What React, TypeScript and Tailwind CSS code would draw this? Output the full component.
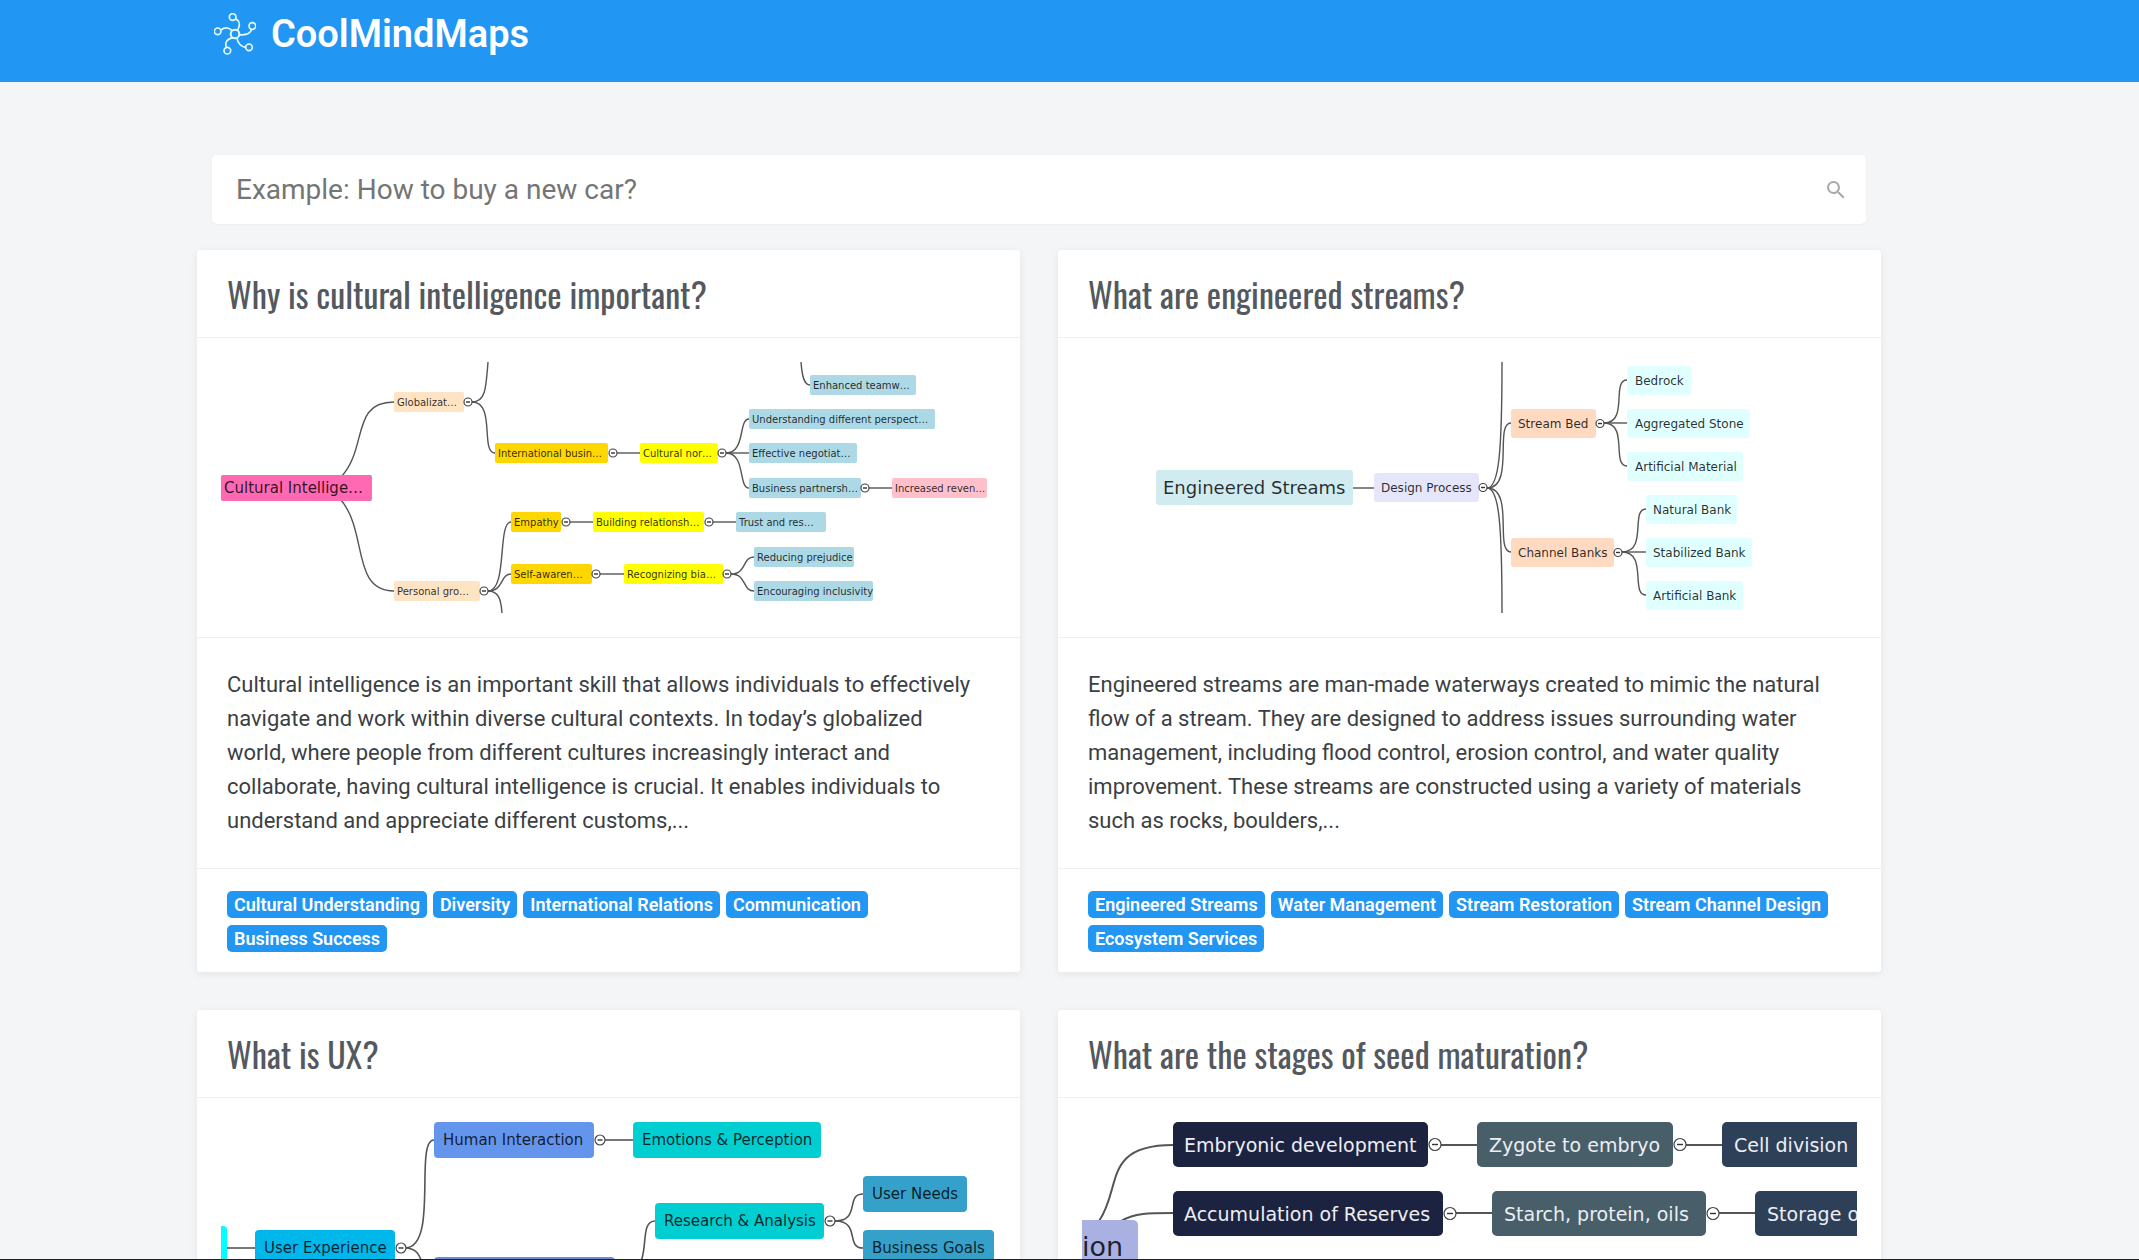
import React from 'react';
import { MdSearch } from 'react-icons/md';

interface MapNode {
  x: number;
  y: number;
  w: number;
  h: number;
  label?: string;
  fill: string;
  size?: number;
  pad?: number;
  color?: string;
  toggle?: number;
}

interface MindMapData {
  nodes: MapNode[];
  edges: string[];
  r: number;
  radius: number;
  stroke: number;
}

interface Article {
  slug: string;
  title: string;
  map: MindMapData;
  text?: string;
  tags?: string[];
}

const culturalMap: MindMapData = {
  r: 4,
  radius: 2,
  stroke: 1.4,
  edges: [
    'M121 114 C147 84 130 40 173 40',
    'M120 138 C147 170 130 229 173 229',
    'M251 40 C264 40 265 28 267 0',
    'M251 40 C275 40 259 91 274 91',
    'M395 91 H419',
    'M505 91 C525 91 517 57 528 57',
    'M505 91 H528',
    'M505 91 C525 91 517 126 528 126',
    'M580 0 C581 14 583 23 589 23',
    'M648 126 H671',
    'M267 229 C287 229 276 160 290 160',
    'M267 229 C283 229 279 212 290 212',
    'M267 229 C278 229 280 238 281 251',
    'M349 160 H372',
    'M491 160 H515',
    'M379 212 H403',
    'M510 212 C526 212 521 195 533 195',
    'M510 212 C526 212 521 229 533 229',
  ],
  nodes: [
    { x: 0, y: 113, w: 151, h: 26, label: 'Cultural Intellige…', fill: '#ff69b4', size: 15, pad: 3 },
    { x: 173, y: 30, w: 70, h: 20, label: 'Globalizat…', fill: '#ffe4c4', size: 10, pad: 3, toggle: 247 },
    { x: 173, y: 219, w: 86, h: 20, label: 'Personal gro…', fill: '#ffe4c4', size: 10, pad: 3, toggle: 263 },
    { x: 274, y: 81, w: 113, h: 20, label: 'International busin…', fill: '#ffd700', size: 10, pad: 3, toggle: 392 },
    { x: 419, y: 81, w: 78, h: 20, label: 'Cultural nor…', fill: '#ffff00', size: 10, pad: 3, toggle: 501 },
    { x: 589, y: 13, w: 106, h: 20, label: 'Enhanced teamw…', fill: '#add8e6', size: 10, pad: 3 },
    { x: 528, y: 47, w: 186, h: 20, label: 'Understanding different perspect…', fill: '#add8e6', size: 10, pad: 3 },
    { x: 528, y: 81, w: 108, h: 20, label: 'Effective negotiat…', fill: '#add8e6', size: 10, pad: 3 },
    { x: 528, y: 116, w: 112, h: 20, label: 'Business partnersh…', fill: '#add8e6', size: 10, pad: 3, toggle: 644 },
    { x: 671, y: 116, w: 95, h: 20, label: 'Increased reven…', fill: '#ffc0cb', size: 10, pad: 3 },
    { x: 290, y: 150, w: 50, h: 20, label: 'Empathy', fill: '#ffd700', size: 10, pad: 3, toggle: 345 },
    { x: 372, y: 150, w: 111, h: 20, label: 'Building relationsh…', fill: '#ffff00', size: 10, pad: 3, toggle: 488 },
    { x: 515, y: 150, w: 90, h: 20, label: 'Trust and res…', fill: '#add8e6', size: 10, pad: 3 },
    { x: 290, y: 202, w: 81, h: 20, label: 'Self-awaren…', fill: '#ffd700', size: 10, pad: 3, toggle: 375 },
    { x: 403, y: 202, w: 99, h: 20, label: 'Recognizing bia…', fill: '#ffff00', size: 10, pad: 3, toggle: 506 },
    { x: 533, y: 185, w: 100, h: 20, label: 'Reducing prejudice', fill: '#add8e6', size: 10, pad: 3 },
    { x: 533, y: 219, w: 119, h: 20, label: 'Encouraging inclusivity', fill: '#add8e6', size: 10, pad: 3 },
  ],
};

const streamsMap: MindMapData = {
  r: 4,
  radius: 3,
  stroke: 1.4,
  edges: [
    'M271 126 H292',
    'M405 126 C417 126 420 90 420 0',
    'M405 126 C433 126 412 61 429 61',
    'M405 126 C433 126 412 190 429 190',
    'M405 126 C417 126 420 161 420 251',
    'M522 61 C547 61 529 18 545 18',
    'M522 61 H545',
    'M522 61 C547 61 529 104 545 104',
    'M540 190 C566 190 548 147 564 147',
    'M540 190 H564',
    'M540 190 C566 190 548 233 564 233',
  ],
  nodes: [
    { x: 74, y: 108, w: 197, h: 35, label: 'Engineered Streams', fill: '#d1ecf0', size: 18, pad: 7 },
    { x: 292, y: 111, w: 105, h: 29, label: 'Design Process', fill: '#e6e6fa', size: 12, pad: 7, toggle: 401 },
    { x: 429, y: 47, w: 85, h: 29, label: 'Stream Bed', fill: '#ffdac1', size: 12, pad: 7, toggle: 518 },
    { x: 429, y: 176, w: 103, h: 29, label: 'Channel Banks', fill: '#ffdac1', size: 12, pad: 7, toggle: 536 },
    { x: 545, y: 4, w: 64, h: 29, label: 'Bedrock', fill: '#e0ffff', size: 12, pad: 8 },
    { x: 545, y: 47, w: 123, h: 29, label: 'Aggregated Stone', fill: '#e0ffff', size: 12, pad: 8 },
    { x: 545, y: 90, w: 116, h: 29, label: 'Artificial Material', fill: '#e0ffff', size: 12, pad: 8 },
    { x: 564, y: 133, w: 91, h: 29, label: 'Natural Bank', fill: '#e0ffff', size: 12, pad: 7 },
    { x: 564, y: 176, w: 106, h: 29, label: 'Stabilized Bank', fill: '#e0ffff', size: 12, pad: 7 },
    { x: 564, y: 219, w: 97, h: 29, label: 'Artificial Bank', fill: '#e0ffff', size: 12, pad: 7 },
  ],
};

const uxMap: MindMapData = {
  r: 5,
  radius: 4,
  stroke: 1.6,
  edges: [
    'M6 126 H34',
    'M184 126 C218 126 193 18 213 18',
    'M184 126 C206 126 197 153 213 153',
    'M384 18 H413',
    'M400 153 C436 153 414 99 434 99',
    'M614 99 C640 99 624 72 642 72',
    'M614 99 C640 99 624 126 642 126',
  ],
  nodes: [
    { x: -20, y: 104, w: 26, h: 44, fill: '#00ffff' },
    { x: 34, y: 108, w: 140, h: 36, label: 'User Experience', fill: '#00b7eb', size: 15, pad: 9, toggle: 180 },
    { x: 213, y: 0, w: 160, h: 36, label: 'Human Interaction', fill: '#6495ed', size: 15, pad: 9, toggle: 379 },
    { x: 213, y: 135, w: 181, h: 36, fill: '#6a8fd8' },
    { x: 412, y: 0, w: 188, h: 36, label: 'Emotions & Perception', fill: '#00ced1', size: 15, pad: 9 },
    { x: 434, y: 81, w: 169, h: 36, label: 'Research & Analysis', fill: '#00ced1', size: 15, pad: 9, toggle: 609 },
    { x: 642, y: 54, w: 104, h: 36, label: 'User Needs', fill: '#35a0ca', size: 15, pad: 9 },
    { x: 642, y: 108, w: 131, h: 36, label: 'Business Goals', fill: '#35a0ca', size: 15, pad: 9 },
  ],
};

const seedMap: MindMapData = {
  r: 6,
  radius: 5,
  stroke: 2,
  edges: [
    'M17 99 C40 66 20 23 91 23',
    'M39 99 C53 91 66 91 91 91',
    'M359 23 H395',
    'M604 23 H640',
    'M374 91 H410',
    'M637 91 H673',
  ],
  nodes: [
    { x: -120, y: 98, w: 176, h: 54, fill: '#a8b1e1' },
    { x: 91, y: 0, w: 255, h: 45, label: 'Embryonic development', fill: '#1c2340', size: 19, pad: 11, color: '#eceef4', toggle: 353 },
    { x: 395, y: 0, w: 196, h: 45, label: 'Zygote to embryo', fill: '#485f6a', size: 19, pad: 12, color: '#eceef4', toggle: 598 },
    { x: 640, y: 0, w: 180, h: 45, label: 'Cell division', fill: '#2e4057', size: 19, pad: 12, color: '#eceef4' },
    { x: 91, y: 69, w: 270, h: 45, label: 'Accumulation of Reserves', fill: '#1c2340', size: 19, pad: 11, color: '#eceef4', toggle: 368 },
    { x: 410, y: 69, w: 214, h: 45, label: 'Starch, protein, oils', fill: '#485f6a', size: 19, pad: 12, color: '#eceef4', toggle: 631 },
    { x: 673, y: 69, w: 180, h: 45, label: 'Storage o', fill: '#2e4057', size: 19, pad: 12, color: '#eceef4' },
    { x: 93, y: 137, w: 128, h: 46, fill: '#1c2340' },
    { x: 275, y: 137, w: 148, h: 46, fill: '#485f6a' },
    { x: 476, y: 137, w: 220, h: 46, fill: '#2e4057' },
    { x: 0, y: 98, w: 48, h: 52, label: 'ion', fill: 'none', size: 27, pad: 0 },
  ],
};

const articles: Article[] = [
  {
    slug: 'cultural-intelligence',
    title: 'Why is cultural intelligence important?',
    map: culturalMap,
    text: 'Cultural intelligence is an important skill that allows individuals to effectively navigate and work within diverse cultural contexts. In today’s globalized world, where people from different cultures increasingly interact and collaborate, having cultural intelligence is crucial. It enables individuals to understand and appreciate different customs,...',
    tags: ['Cultural Understanding', 'Diversity', 'International Relations', 'Communication', 'Business Success'],
  },
  {
    slug: 'engineered-streams',
    title: 'What are engineered streams?',
    map: streamsMap,
    text: 'Engineered streams are man-made waterways created to mimic the natural flow of a stream. They are designed to address issues surrounding water management, including flood control, erosion control, and water quality improvement. These streams are constructed using a variety of materials such as rocks, boulders,...',
    tags: ['Engineered Streams', 'Water Management', 'Stream Restoration', 'Stream Channel Design', 'Ecosystem Services'],
  },
  { slug: 'ux', title: 'What is UX?', map: uxMap },
  { slug: 'seed-maturation', title: 'What are the stages of seed maturation?', map: seedMap },
];

const LogoIcon = () => (
  <svg viewBox="18 15 126 126" fill="none" stroke="#e6fbff" strokeWidth="5" className="w-[42px] h-[42px]" aria-hidden="true">
    <circle cx="81" cy="78" r="13" strokeWidth="6" />
    <circle cx="74" cy="27" r="10" />
    <circle cx="133" cy="54" r="10" />
    <circle cx="123" cy="118" r="10" />
    <circle cx="58" cy="128" r="10" />
    <circle cx="29" cy="70" r="10" />
    <path d="M83 32 C97 40 97 55 88 67" />
    <path d="M94 80 C112 82 127 78 131 64" />
    <path d="M87 90 C89 106 100 117 113 118" />
    <path d="M74 89 C54 94 50 106 55 118" />
    <path d="M38 66 C52 56 66 59 72 68" />
  </svg>
);

const MindMap = ({ map, title }: { map: MindMapData; title: string }) => (
  <svg viewBox="0 0 775 251" className="block w-full h-auto overflow-hidden font-['DejaVu_Sans',sans-serif]" role="img" aria-label={title}>
    {map.edges.map((d) => (
      <path key={d} d={d} fill="none" stroke="#555555" strokeWidth={map.stroke} />
    ))}
    {map.nodes.map((n) => {
      const cy = n.y + n.h / 2;
      return (
        <g key={`${n.x}-${n.y}`}>
          <rect x={n.x} y={n.y} width={n.w} height={n.h} rx={map.radius} fill={n.fill} />
          {n.label && (
            <text x={n.x + (n.pad ?? 0)} y={cy} dominantBaseline="central" fontSize={n.size} fill={n.color ?? 'rgba(0,0,0,0.82)'}>
              {n.label}
            </text>
          )}
          {n.toggle && (
            <>
              <circle cx={n.toggle} cy={cy} r={map.r} fill="#ffffff" stroke="#444444" strokeWidth="1.2" />
              <path d={`M${n.toggle - map.r / 2} ${cy} h${map.r}`} stroke="#333333" strokeWidth="1.4" />
            </>
          )}
        </g>
      );
    })}
  </svg>
);

const ArticleCard = ({ article }: { article: Article }) => (
  <article className="bg-white rounded-[3px] shadow-[0_2px_8px_rgba(0,0,0,0.07)]">
    <h2 className="flex items-center h-[88px] px-[30px] border-b border-[#edeff1] font-['Oswald',sans-serif] font-normal text-[34px] leading-none text-[#54595f]">
      <a href={`#${article.slug}`}>{article.title}</a>
    </h2>
    <div className="p-6">
      <MindMap map={article.map} title={article.title} />
    </div>
    {article.text && (
      <p className="border-t border-[#edeff1] pt-[30px] pb-[30px] pl-[30px] pr-12 text-[22px] leading-[34px] text-[#3b3f44]">
        {article.text}
      </p>
    )}
    {article.tags && (
      <div className="flex flex-wrap gap-x-[6px] gap-y-[7px] border-t border-[#edeff1] px-[30px] pt-[22px] pb-5">
        {article.tags.map((tag) => (
          <a key={tag} href="#tags" className="rounded-[5px] bg-[#2196f3] px-[7px] text-[18px] leading-[27px] font-semibold text-white">
            {tag}
          </a>
        ))}
      </div>
    )}
  </article>
);

export default function App() {
  return (
    <div className="h-screen overflow-hidden bg-[#f4f5f7] font-['Roboto',sans-serif]">
      <header className="h-[82px] bg-[#2196f3] pl-[214px] pt-3">
        <a href="#home" className="flex w-fit items-center gap-[15px] text-[38px] leading-[44px] font-semibold text-white">
          <LogoIcon />
          CoolMindMaps
        </a>
      </header>

      <main className="ml-[197px] mr-[258px] pt-[73px]">
        <form className="mx-[15px] flex h-[69px] items-center rounded-[5px] bg-white pl-6 pr-[18px] shadow-[0_1px_3px_rgba(0,0,0,0.04)]" onSubmit={(e) => e.preventDefault()}>
          <input
            type="text"
            aria-label="Search mind maps"
            placeholder="Example: How to buy a new car?"
            className="min-w-0 flex-1 bg-transparent text-[28px] text-gray-700 outline-none placeholder:text-[#757575]"
          />
          <button type="submit" aria-label="Search" className="text-[#a9a9a9]">
            <MdSearch size={24} />
          </button>
        </form>

        <div className="mt-[26px] grid grid-cols-2 gap-[38px]">
          {articles.map((article) => (
            <ArticleCard key={article.slug} article={article} />
          ))}
        </div>
      </main>

      <div className="fixed inset-x-0 bottom-0 h-px bg-[#202124]" />
    </div>
  );
}
